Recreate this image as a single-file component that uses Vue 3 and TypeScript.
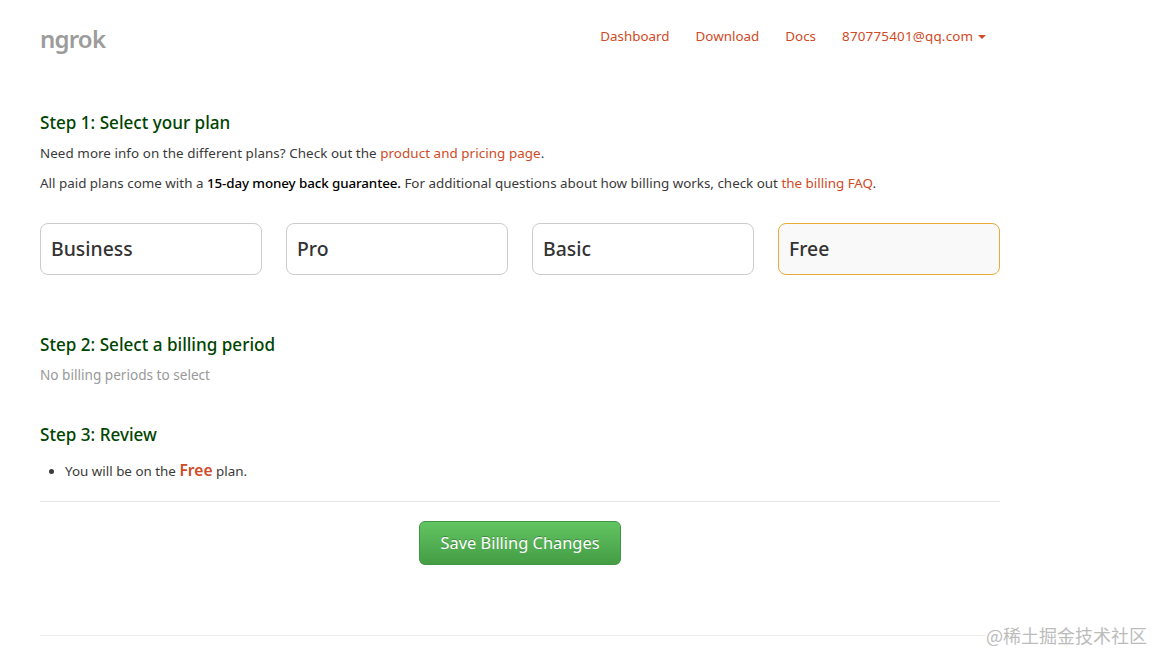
<script setup lang="ts">
const navLinks: string[] = ['Dashboard', 'Download', 'Docs']
const plans: { name: string; active: boolean }[] = [
  { name: 'Business', active: false },
  { name: 'Pro', active: false },
  { name: 'Basic', active: false },
  { name: 'Free', active: true },
]
</script>

<template>
  <div class="page">
    <header class="header">
      <a class="logo">ngrok</a>
      <nav class="nav">
        <a v-for="l in navLinks" :key="l" class="nav-link">{{ l }}</a>
        <a class="nav-link email">870775401@qq.com <span class="caret"></span></a>
      </nav>
    </header>

    <section class="step1">
      <h4 class="step-title">Step 1: Select your plan</h4>
      <p class="line first">Need more info on the different plans? Check out the <a class="link">product and pricing page</a>.</p>
      <p class="line">All paid plans come with a <strong>15-day money back guarantee.</strong> For additional questions about how billing works, check out <a class="link">the billing FAQ</a>.</p>
      <div class="plans">
        <div v-for="p in plans" :key="p.name" class="plan" :class="{ active: p.active }">{{ p.name }}</div>
      </div>
    </section>

    <section class="step2">
      <h4 class="step-title">Step 2: Select a billing period</h4>
      <p class="muted">No billing periods to select</p>
    </section>

    <section class="step3">
      <h4 class="step-title">Step 3: Review</h4>
      <ul class="review">
        <li>You will be on the <span class="free">Free</span> plan.</li>
      </ul>
    </section>

    <div class="actions">
      <button class="save">Save Billing Changes</button>
    </div>
    <div class="footer-rule"></div>
    <div class="watermark">@稀土掘金技术社区</div>
  </div>
</template>

<style scoped>
.page {
  position: relative;
  box-sizing: border-box;
  width: 1153px;
  height: 652px;
  overflow: hidden;
  padding: 0 153px 0 40px;
  font-family: "Noto Sans", "Open Sans", sans-serif;
  font-size: 13.4px;
  line-height: 20px;
  color: #3a3a3a;
  background: #fff;
}
.header {
  display: flex;
  justify-content: space-between;
  height: 71px;
  padding-right: 14px;
}
.logo {
  margin-top: 25px;
  font-size: 24px;
  line-height: 28px;
  font-weight: 600;
  letter-spacing: -0.8px;
  color: #9c9c9c;
}
.nav {
  display: flex;
  gap: 26px;
  margin-top: 26px;
}
.nav-link {
  color: #cf4a26;
  white-space: nowrap;
}
.email { letter-spacing: 0.2px; }
.caret {
  display: inline-block;
  width: 0;
  height: 0;
  margin-left: 1px;
  vertical-align: middle;
  border-top: 4px solid #cf4a26;
  border-left: 4px solid transparent;
  border-right: 4px solid transparent;
}
.step1 { padding-top: 40px; }
.step-title {
  margin: 0;
  font-size: 17.1px;
  line-height: 24px;
  font-weight: 500;
  color: #004400;
}
.line {
  margin: 7px 0 0;
  line-height: 23px;
  white-space: nowrap;
}
.line.first { letter-spacing: 0.06px; }
.line + .line { margin-top: 7px; }
.link { color: #cf4a26; }
strong { font-weight: 500; color: #000; letter-spacing: -0.1px; }
.plans {
  display: grid;
  grid-template-columns: repeat(4, 222px);
  gap: 24px;
  margin-top: 28px;
}
.plan {
  box-sizing: border-box;
  height: 52px;
  padding: 0 10px;
  border: 1px solid #ccc;
  border-radius: 8px;
  font-size: 19.4px;
  font-weight: 500;
  line-height: 50px;
  color: #333;
}
.plan.active {
  background: #f9f9f9;
  border-color: #e8ab3a;
}
.step2 { padding-top: 58px; }
.muted {
  margin: 8px 0 0;
  font-size: 13.6px;
  color: #999;
}
.step3 { padding-top: 38px; }
.review {
  margin: 13px 0 0;
  padding-left: 25px;
}
.free {
  font-size: 15.6px;
  font-weight: 600;
  color: #cf4a26;
}
.actions {
  margin-top: 20px;
  padding-top: 19px;
  border-top: 1px solid #e5e5e5;
  display: flex;
  justify-content: center;
}
.save {
  width: 202px;
  height: 44px;
  padding: 0 0 2px;
  border: 1px solid #419641;
  border-radius: 6px;
  background: linear-gradient(to bottom, #62c462, #449d44);
  color: #fff;
  font-family: "Noto Sans", "Open Sans", sans-serif;
  font-size: 16.4px;
  text-shadow: 0 -1px 0 rgba(0, 0, 0, 0.25);
}
.footer-rule {
  margin-top: 70px;
  height: 1px;
  background: #eee;
}
.watermark {
  position: absolute;
  right: 6px;
  bottom: 5px;
  font-family: "Noto Sans CJK SC", "Noto Sans", sans-serif;
  font-size: 18px;
  line-height: 24px;
  color: #bcbcbc;
  background: #fff;
}
</style>

<style>
body { margin: 0; background: #fff; }
</style>
